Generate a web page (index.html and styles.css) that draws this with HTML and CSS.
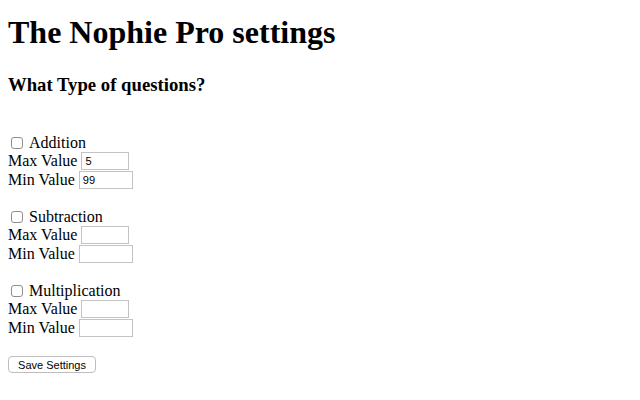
FILE: index.html
```html
<!DOCTYPE html>
<html>
<head>
<meta charset="utf-8">
<link rel="stylesheet" href="styles.css">
</head>
<body>
<h1 class="title">The Nophie Pro settings</h1>
<h3 class="subtitle">What Type of questions?</h3>
<form class="form">
  <div class="group">
    <label class="check-row"><input type="checkbox" class="check"> Addition</label>
    <div class="field-row">Max Value <input type="text" class="input input-max" value="5"></div>
    <div class="field-row">Min Value <input type="text" class="input input-min" value="99"></div>
  </div>
  <div class="group">
    <label class="check-row"><input type="checkbox" class="check"> Subtraction</label>
    <div class="field-row">Max Value <input type="text" class="input input-max"></div>
    <div class="field-row">Min Value <input type="text" class="input input-min"></div>
  </div>
  <div class="group">
    <label class="check-row"><input type="checkbox" class="check"> Multiplication</label>
    <div class="field-row">Max Value <input type="text" class="input input-max"></div>
    <div class="field-row">Min Value <input type="text" class="input input-min"></div>
  </div>
  <button type="button" class="save">Save Settings</button>
</form>
</body>
</html>
```

FILE: styles.css
```css
html, body {
  background: #fff;
}
body {
  margin: 0;
  padding: 0 8px 8px;
  font-family: "Liberation Serif", "Times New Roman", serif;
  font-size: 16px;
  color: #000;
}
.title {
  font-size: 32px;
  font-weight: bold;
  margin: 14px 0 23px;
  line-height: 37px;
}
.subtitle {
  font-size: 18.72px;
  font-weight: bold;
  margin: 18px 0;
  line-height: 22px;
}
.form {
  padding-top: 20px;
}
.group {
  margin-bottom: 19px;
}
.check-row {
  display: flex;
  align-items: center;
  height: 17px;
  line-height: 17px;
}
.check {
  appearance: none;
  -webkit-appearance: none;
  width: 12px;
  height: 12px;
  margin: 0 6px 0 3px;
  border: 1px solid #8e8e8e;
  border-radius: 3px;
  background: #fff;
}
.field-row {
  display: flex;
  align-items: center;
  height: 19px;
  line-height: 19px;
  white-space: pre;
}
.input {
  box-sizing: border-box;
  height: 18px;
  margin: 0;
  padding: 1px 3px;
  border: 1px solid #c3c3c3;
  border-radius: 0;
  font-family: "Liberation Sans", Arial, sans-serif;
  font-size: 11px;
  color: #000;
  background: #fff;
  outline: none;
}
.input-max {
  width: 48px;
}
.input-min {
  width: 54px;
}
.save {
  display: block;
  box-sizing: border-box;
  margin: 0;
  width: 88px;
  height: 17px;
  padding: 0;
  border: 1px solid #bdbdbd;
  border-radius: 4px;
  background: #fff;
  font-family: "Liberation Sans", Arial, sans-serif;
  font-size: 11px;
  color: #000;
}
```
